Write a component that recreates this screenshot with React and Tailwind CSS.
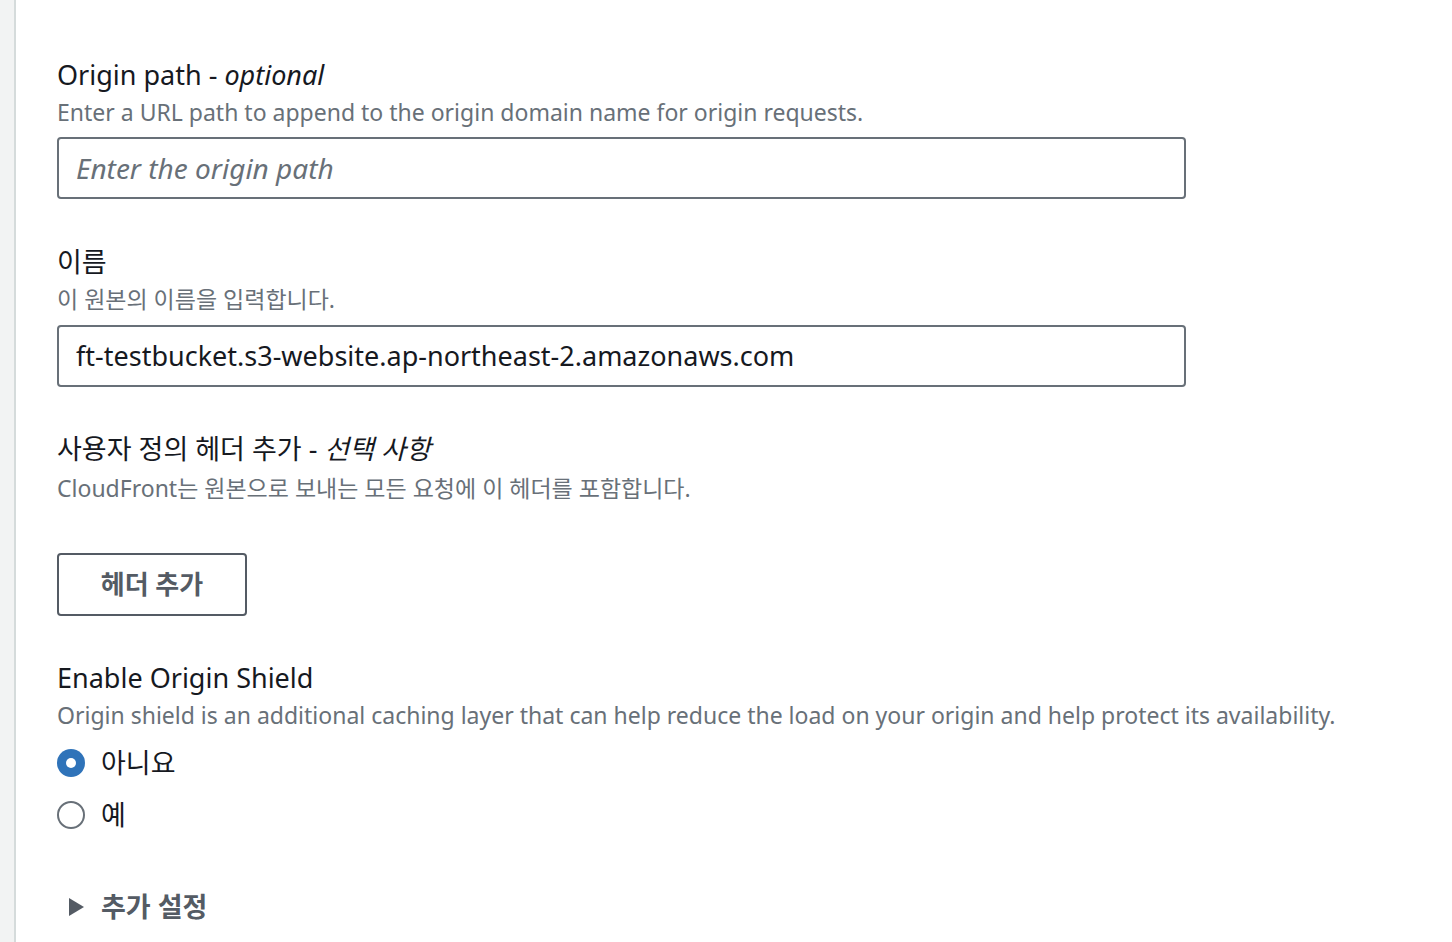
import React from "react";

const font = { fontFamily: '"Noto Sans", "Noto Sans CJK KR", sans-serif' };

export default function App() {
  return (
    <div className="flex w-[1452px] h-[942px] bg-white overflow-hidden" style={font}>
      <div className="w-[16px] shrink-0 bg-[#f2f3f3] border-r-2 border-[#d5dbdb]" />
      <div className="flex-1 pl-[41px] pt-[56px]">
        {/* Origin path */}
        <div className="w-[1129px]">
          <div className="text-[27px] leading-[38px] text-[#16191f]">
            Origin path - <i>optional</i>
          </div>
          <div className="text-[23px] leading-[36px] text-[#687078]">
            Enter a URL path to append to the origin domain name for origin requests.
          </div>
          <div className="mt-[7px] h-[62px] border-2 border-[#687078] rounded-[4px] flex items-center px-[17px]">
            <span className="text-[28px] italic text-[#687078]">Enter the origin path</span>
          </div>
        </div>

        {/* Name */}
        <div className="w-[1129px] mt-[44px]">
          <div className="text-[27px] leading-[38px] text-[#16191f]">이름</div>
          <div className="text-[23px] leading-[36px] text-[#687078]">이 원본의 이름을 입력합니다.</div>
          <div className="mt-[8px] h-[62px] border-2 border-[#687078] rounded-[4px] flex items-center px-[17px]">
            <span className="text-[27px] text-[#16191f]">ft-testbucket.s3-website.ap-northeast-2.amazonaws.com</span>
          </div>
        </div>

        {/* Custom header */}
        <div className="mt-[43px]">
          <div className="text-[27px] leading-[38px] text-[#16191f]">
            사용자 정의 헤더 추가 - <i>선택 사항</i>
          </div>
          <div className="mt-[2px] text-[23px] leading-[36px] text-[#687078]">
            CloudFront는 원본으로 보내는 모든 요청에 이 헤더를 포함합니다.
          </div>
          <button className="mt-[47px] w-[190px] h-[63px] border-2 border-[#545b64] rounded-[4px] bg-white text-[26px] font-bold text-[#545b64] flex items-center justify-center">
            헤더 추가
          </button>
        </div>

        {/* Origin Shield */}
        <div className="mt-[43px]">
          <div className="text-[27px] leading-[38px] text-[#16191f]">Enable Origin Shield</div>
          <div className="text-[23px] leading-[36px] text-[#687078]">
            Origin shield is an additional caching layer that can help reduce the load on your origin and help protect its availability.
          </div>
          <div className="mt-[16px] flex flex-col gap-[24px]">
            <label className="flex items-center gap-[16px] h-[28px]">
              <span className="w-[28px] h-[28px] rounded-full bg-[#2f73b9] flex items-center justify-center">
                <span className="w-[10px] h-[10px] rounded-full bg-white" />
              </span>
              <span className="text-[27px] text-[#16191f]">아니요</span>
            </label>
            <label className="flex items-center gap-[16px] h-[28px]">
              <span className="w-[28px] h-[28px] rounded-full border-2 border-[#687078] bg-white" />
              <span className="text-[27px] text-[#16191f]">예</span>
            </label>
          </div>
        </div>

        {/* Additional settings */}
        <div className="mt-[64px] flex items-center gap-[16px] pl-[11px] h-[28px]">
          <svg width="17" height="20" viewBox="0 0 17 20">
            <path d="M1 1 L16 10 L1 19 Z" fill="#545b64" />
          </svg>
          <span className="text-[27px] font-bold text-[#545b64]">추가 설정</span>
        </div>
      </div>
    </div>
  );
}
